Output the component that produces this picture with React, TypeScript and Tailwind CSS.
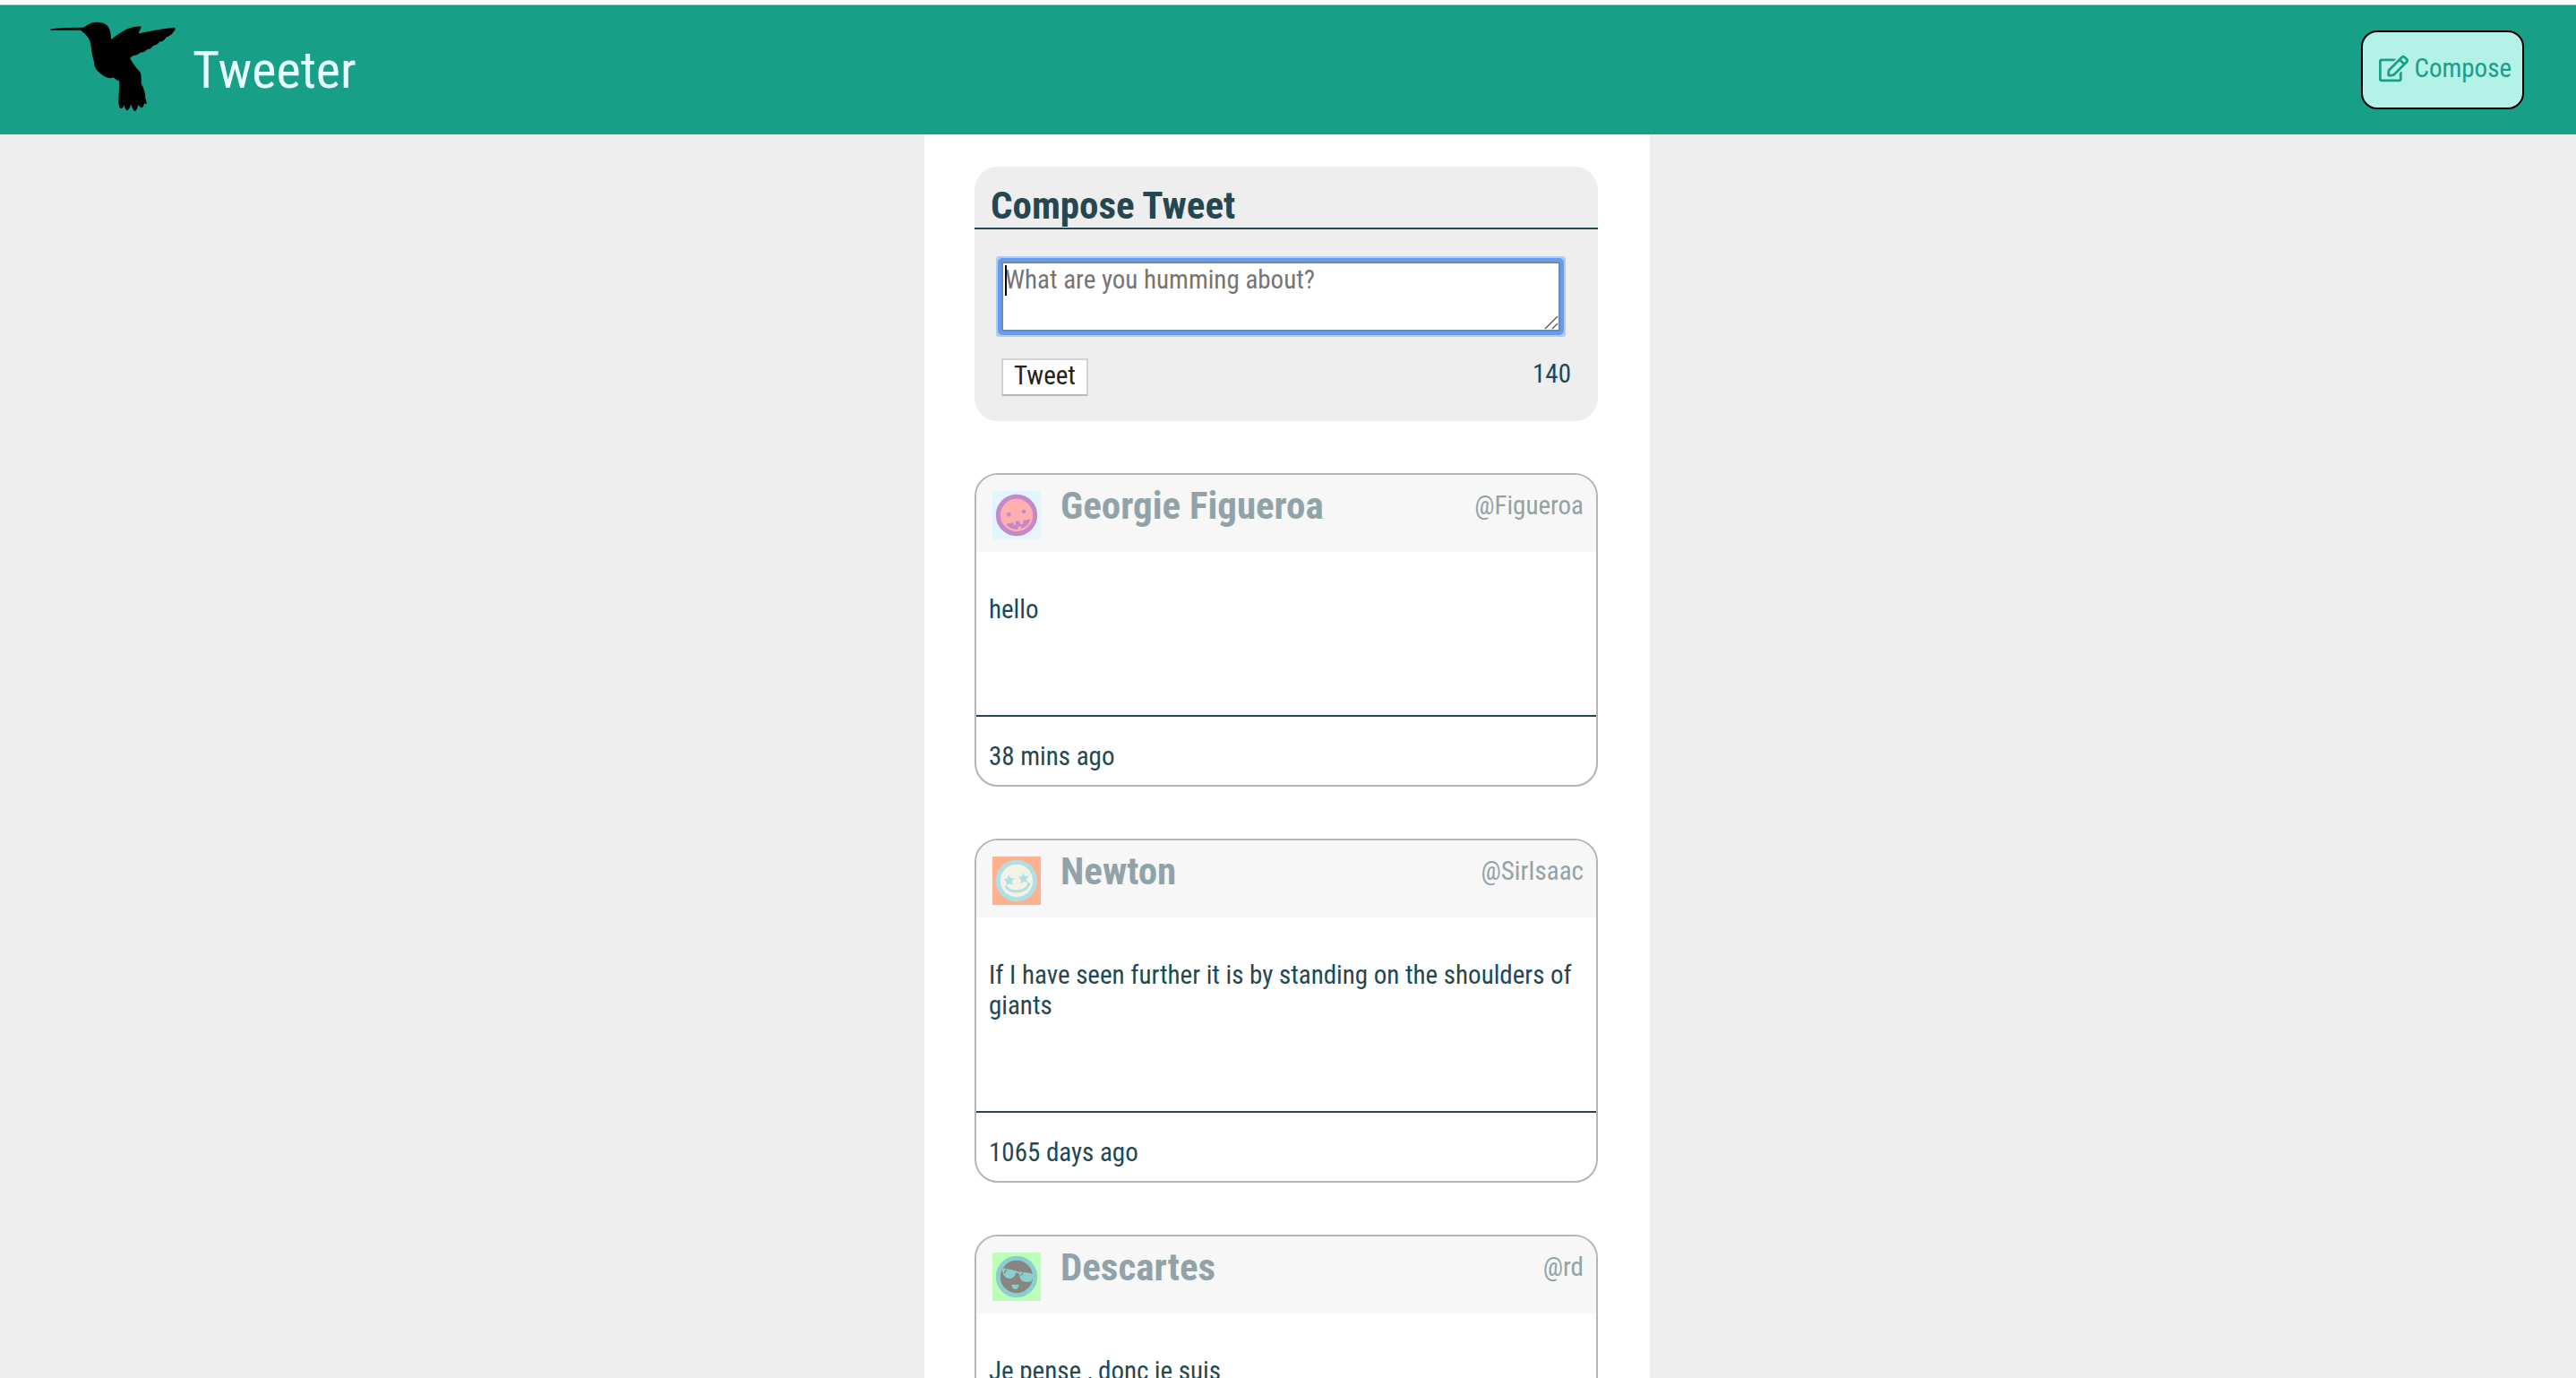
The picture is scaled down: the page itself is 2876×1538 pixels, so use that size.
import { FaRegEdit } from "react-icons/fa";

type AvatarKind = "monster" | "stars" | "shades";

type Tweet = {
  name: string;
  handle: string;
  text: string;
  age: string;
  avatar: AvatarKind;
};

const tweets: Tweet[] = [
  { name: "Georgie Figueroa", handle: "@Figueroa", text: "hello", age: "38 mins ago", avatar: "monster" },
  {
    name: "Newton",
    handle: "@SirIsaac",
    text: "If I have seen further it is by standing on the shoulders of giants",
    age: "1065 days ago",
    avatar: "stars",
  },
  { name: "Descartes", handle: "@rd", text: "Je pense , donc je suis", age: "", avatar: "shades" },
];

function Hummingbird() {
  return (
    <svg viewBox="18 26 420 302" className="mb-2 h-[101px] w-[140px] shrink-0" aria-hidden="true">
      <path
        d="M19 51 C50 47 90 46 127 46 C135 44 142 36 152 32 C168 26 192 26 205 36 C219 46 221 62 222 86 C236 76 262 56 280 49 C295 43 310 41 323 42 C324 46 318 54 314 66 C350 59 395 49 432 46 C439 46 438 51 434 57 C428 66 420 73 413 76 C409 78 407 77 405 81 C402 87 394 93 385 93 C382 95 380 102 368 105 C365 106 362 106 360 110 C355 117 347 119 342 119 C338 126 328 129 320 129 C316 135 307 139 300 139 C294 140 288 144 286 150 C293 162 306 181 317 192 C323 198 323 210 323 222 L323 234 C329 243 334 258 336 269 C338 275 336 277 336 280 C339 287 341 296 341 301 C336 303 334 299 333 299 C332 307 329 313 324 315 C318 312 315 308 313 304 C311 314 308 323 302 326 C296 322 291 313 289 302 C286 309 284 319 276 324 C270 321 267 313 266 304 C265 311 260 317 255 318 C250 315 248 307 247 296 C247 270 250 246 250 225 C242 222 235 218 230 212 C222 218 208 215 198 208 C183 199 170 187 166 172 C165 163 165 158 162 150 C158 136 156 113 153 98 C150 82 137 68 120 55 C90 55 50 55 19 54 Z"
        fill="#000"
      />
    </svg>
  );
}

function Avatar({ kind }: { kind: AvatarKind }) {
  if (kind === "monster") {
    return (
      <svg viewBox="0 0 162 162" className="size-[54px] shrink-0" aria-hidden="true">
        <rect width="162" height="162" fill="#e1f6ff" />
        <circle cx="81" cy="81" r="62" fill="#ffafb0" stroke="#c489c8" strokeWidth="15" />
        <circle cx="55" cy="79" r="7" fill="#c489c8" />
        <circle cx="105" cy="69" r="7" fill="#c489c8" />
        <path
          d="M46 111 L70 105 L72 113 L79 115 L77 101 L91 101 L93 111 L101 111 L103 99 L127 94 C124 110 113 122 96 126 L94 118 L86 119 L85 129 C68 129 54 122 46 111 Z"
          fill="#c489c8"
        />
      </svg>
    );
  }
  if (kind === "stars") {
    return (
      <svg viewBox="0 0 162 162" className="size-[54px] shrink-0" aria-hidden="true">
        <rect width="162" height="162" fill="#ffb18f" />
        <circle cx="81" cy="81" r="62" fill="#f2f3e4" stroke="#b0dfe5" strokeWidth="15" />
        <path
          d="M54 61 L60 72 L73 73 L65 83 L69 95 L57 91 L46 97 L47 85 L38 76 L50 73 Z M102 54 L109 65 L122 65 L114 75 L118 87 L106 83 L95 90 L96 77 L87 69 L99 66 Z"
          fill="#b0dfe5"
        />
        <path d="M46 102 C58 123 114 122 122 91" fill="none" stroke="#b0dfe5" strokeWidth="9" strokeLinecap="round" />
      </svg>
    );
  }
  return (
    <svg viewBox="0 0 162 162" className="size-[54px] shrink-0" aria-hidden="true">
      <rect width="162" height="162" fill="#bdffb9" />
      <circle cx="81" cy="81" r="62" fill="#8b857f" stroke="#88cfce" strokeWidth="15" />
      <path
        d="M32 52 C50 56 66 57 80 62 C96 66 116 64 137 72 L134 90 C130 102 106 100 97 92 C92 86 91 78 89 70 C86 68 82 68 78 69 C76 80 68 87 58 87 C44 87 33 76 32 52 Z"
        fill="#88cfce"
      />
      <path
        d="M40 68 L46 58 M96 76 L102 69"
        fill="none"
        stroke="#8b857f"
        strokeWidth="4"
        strokeLinecap="round"
      />
      <path d="M64 107 L89 108 C88 118 83 123 76 123 C69 122 65 116 64 107 Z" fill="#88cfce" />
    </svg>
  );
}

function TweetCard({ tweet }: { tweet: Tweet }) {
  return (
    <article className="shrink-0 overflow-hidden rounded-[26px] border-2 border-[#b5b5b5]">
      <header className="flex h-[86px] items-start bg-[#f7f7f7] pr-3.5 pl-[18px] text-[#91a3a8]">
        <div className="pt-[18px]">
          <Avatar kind={tweet.avatar} />
        </div>
        <h2 className="ml-[22px] pt-[9px] text-[43px] leading-[50px] font-bold">{tweet.name}</h2>
        <span className="ml-auto pt-[17px] text-[29px] leading-[34px]">{tweet.handle}</span>
      </header>
      <p className="px-3.5 pt-[47px] pb-[101px] text-[29px] leading-[34px]">{tweet.text}</p>
      <footer className="border-t-2 border-[#244751] px-3.5 pt-[27px] pb-[15px] text-[29px] leading-[34px]">
        {tweet.age}
      </footer>
    </article>
  );
}

export default function App() {
  return (
    <div className="flex h-screen flex-col overflow-hidden bg-[#eee] font-['Roboto_Condensed','Liberation_Sans_Narrow',sans-serif] text-[#244751]">
      <div className="h-1.5 shrink-0 border-b border-[#b4b4b4] bg-white" />
      <nav className="flex h-36 shrink-0 items-center justify-between bg-[#189f87] pr-[58px] pl-14">
        <a href="#" className="flex items-center gap-[19px] text-[58px] leading-[68px] text-[#e6feff]">
          <Hummingbird />
          <span>Tweeter</span>
        </a>
        <button
          type="button"
          className="flex h-[88px] items-center gap-1.5 rounded-[18px] border-2 border-black bg-[#b4f1e6] pr-3 pb-1 pl-[18px] text-[29px] leading-[34px] text-[#189f87]"
        >
          <FaRegEdit className="size-[33px]" />
          Compose
        </button>
      </nav>
      <main className="flex min-h-0 grow justify-center pr-0.5">
        <div className="flex w-full max-w-[810px] flex-col gap-[58px] bg-white pt-9 pr-[58px] pl-14">
          <section className="shrink-0 rounded-[26px] bg-[#eee] pb-7">
            <h2 className="border-b-2 border-[#244751] px-[18px] pt-[18px] text-[43px] leading-[50px] font-bold">
              Compose Tweet
            </h2>
            <form className="pr-[42px] pl-[30px] pt-9">
              <div className="relative">
                <textarea
                  aria-label="Tweet text"
                  placeholder="What are you humming about?"
                  className="block h-[78px] w-full resize-none rounded-[1px] border-2 border-[#6f87aa] bg-white px-0.5 py-px text-[29px] leading-[34px] caret-transparent outline-4 outline-[#649cf0] ring-6 ring-[#b3cbef] placeholder:text-[#757575]"
                />
                <span className="absolute top-1 left-1 h-[34px] w-0.5 bg-black" />
                <svg viewBox="0 0 16 16" className="absolute right-0.5 bottom-0.5 size-4" aria-hidden="true">
                  <path d="M1 15 L15 1 M9 15 L15 9" stroke="#555" strokeWidth="1.4" />
                </svg>
              </div>
              <div className="-mr-3 flex items-start justify-between pt-[30px]">
                <button
                  type="submit"
                  className="h-[42px] border-2 border-[#d2d2d2] border-b-[#b8b8b8] bg-white px-3 pb-1.5 text-[29px] leading-[34px] text-[#222]"
                >
                  Tweet
                </button>
                <output className="text-[29px] leading-[34px]">140</output>
              </div>
            </form>
          </section>
          {tweets.map((tweet) => (
            <TweetCard key={tweet.name} tweet={tweet} />
          ))}
        </div>
      </main>
    </div>
  );
}
